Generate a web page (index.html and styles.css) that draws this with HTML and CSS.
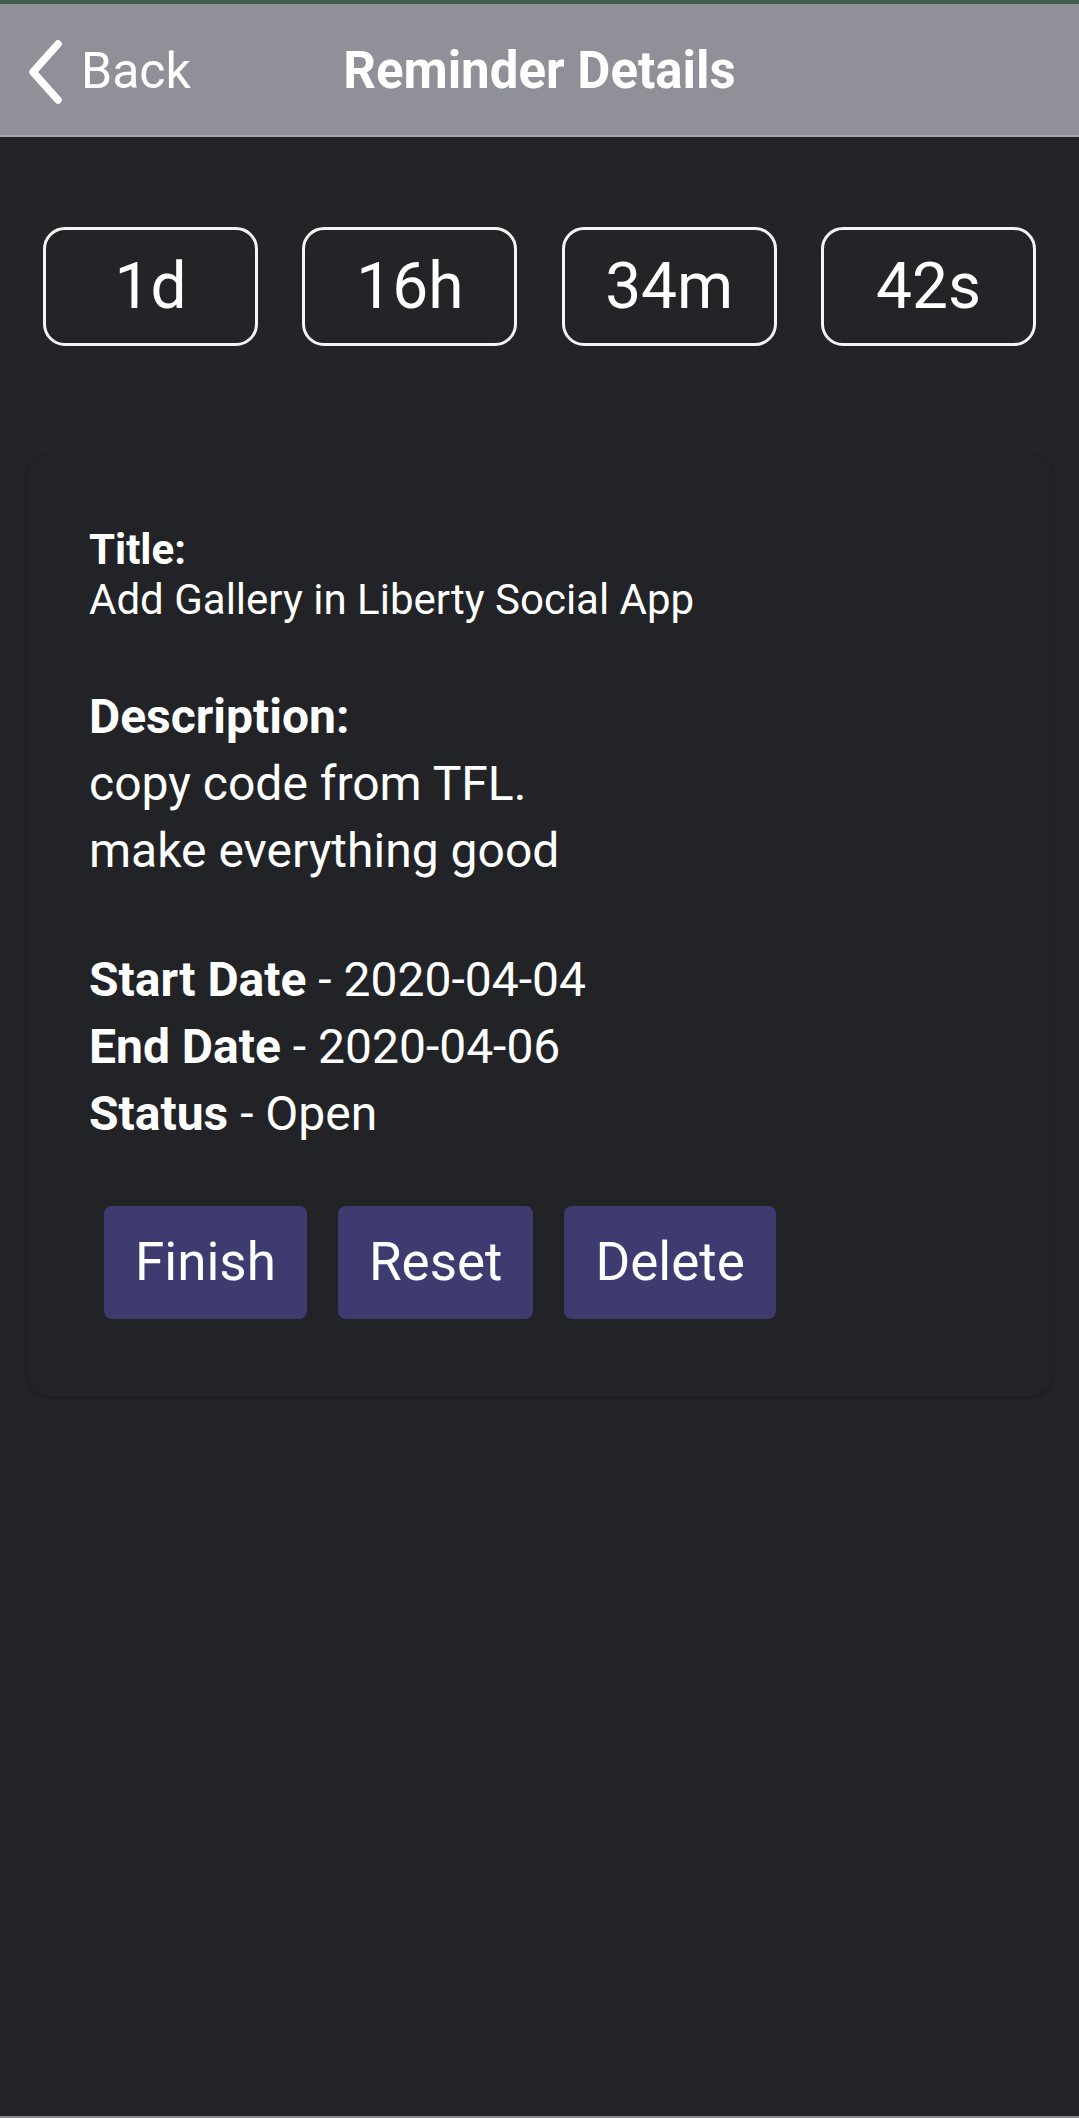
FILE: index.html
```html
<!DOCTYPE html>
<html lang="en">
<head>
<meta charset="utf-8">
<title>Reminder Details</title>
<link rel="stylesheet" href="styles.css">
</head>
<body>
<div class="statusline"></div>
<header class="header">
  <div class="back">
    <svg class="chev" width="40" height="66" viewBox="0 0 40 66"><path d="M31 5 L6 33 L31 61" fill="none" stroke="#fff" stroke-width="7.5" stroke-linecap="round" stroke-linejoin="round"/></svg>
    <span class="back-text">Back</span>
  </div>
  <h1 class="title">Reminder Details</h1>
</header>
<main class="main">
  <div class="timer">
    <div class="tbox">1d</div>
    <div class="tbox">16h</div>
    <div class="tbox">34m</div>
    <div class="tbox">42s</div>
  </div>
  <section class="card">
    <div class="tblock">
      <div class="label-sm">Title:</div>
      <div class="val-sm">Add Gallery in Liberty Social App</div>
    </div>
    <div class="dblock">
      <div class="label">Description:</div>
      <div>copy code from TFL.</div>
      <div>make everything good</div>
    </div>
    <div class="dblock">
      <div><b>Start Date</b> - 2020-04-04</div>
      <div><b>End Date</b> - 2020-04-06</div>
      <div><b>Status</b> - Open</div>
    </div>
    <div class="actions">
      <button class="btn">Finish</button>
      <button class="btn">Reset</button>
      <button class="btn">Delete</button>
    </div>
  </section>
</main>
<div class="bottomline"></div>
</body>
</html>
```
FILE: styles.css
```css
html, body {
  margin: 0;
  padding: 0;
}
body {
  background: #232428;
  width: 1079px;
  height: 2118px;
  font-family: Roboto, "Noto Sans", sans-serif;
  color: #ffffff;
  display: flex;
  flex-direction: column;
  overflow: hidden;
}
.statusline {
  height: 4px;
  background: #3f5e50;
}
.header {
  height: 131px;
  background: #909198;
  border-bottom: 2px solid #a3a4aa;
  position: relative;
  display: flex;
  align-items: center;
  justify-content: center;
}
.back {
  position: absolute;
  left: 27px;
  top: 0;
  bottom: 0;
  display: flex;
  align-items: center;
  gap: 14px;
}
.chev {
  display: block;
  margin-top: 4px;
}
.back-text {
  font-size: 50px;
  line-height: 1;
  margin-top: 2px;
}
.title {
  margin: 0;
  font-size: 51px;
  font-weight: 700;
  line-height: 1;
  margin-top: 2px;
}
.main {
  flex: 1;
  display: flex;
  flex-direction: column;
}
.timer {
  display: flex;
  justify-content: space-between;
  padding: 90px 43px 0;
}
.tbox {
  width: 215px;
  height: 119px;
  box-sizing: border-box;
  border: 3px solid #f4f4f4;
  border-radius: 22px;
  display: flex;
  align-items: center;
  justify-content: center;
  font-size: 64px;
  line-height: 1;
}
.card {
  margin: 108px 27px 0;
  padding: 71px 62px 77px;
  border-radius: 22px;
  background: #222327;
  box-shadow: 0 1px 5px rgba(0, 0, 0, 0.28);
  font-size: 48px;
  line-height: 67px;
}
.tblock {
  font-size: 42px;
  line-height: 50px;
}
.label-sm, .label {
  font-weight: 700;
}
.dblock {
  margin-top: 58px;
}
.dblock + .dblock {
  margin-top: 62px;
}
.actions {
  display: flex;
  margin-top: 59px;
}
.btn {
  margin: 0 15px;
  height: 113px;
  padding: 0 31px;
  border: none;
  border-radius: 8px;
  background: #3d3b6f;
  color: #ffffff;
  font-family: Roboto, "Noto Sans", sans-serif;
  font-size: 53px;
  line-height: 1;
}
.btn + .btn {
  margin-left: 16px;
}
.bottomline {
  height: 2px;
  background: #8a8b90;
}
```
